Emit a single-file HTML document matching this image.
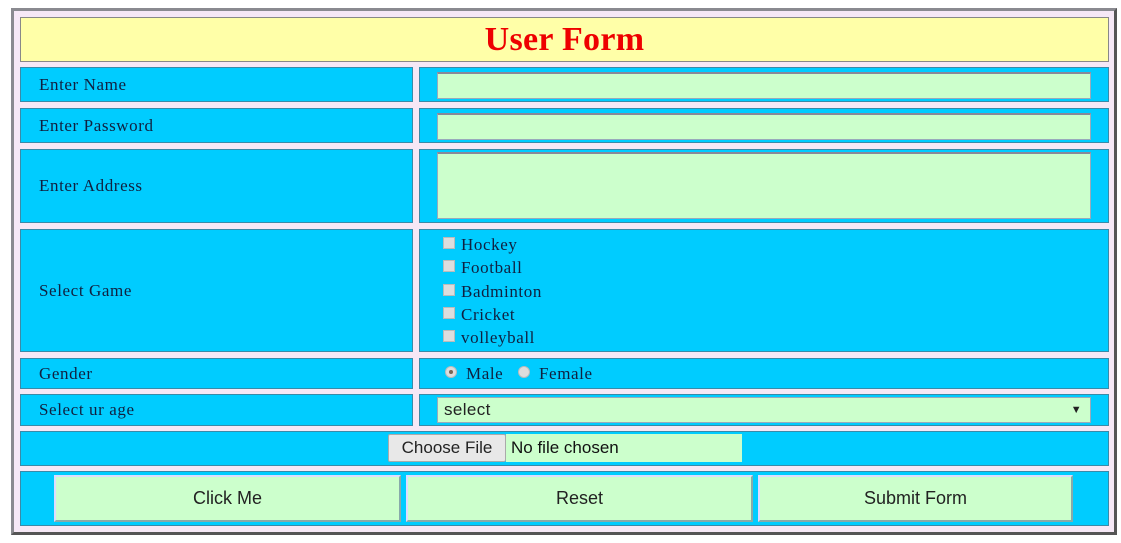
<!DOCTYPE html><html><head><style>
body{margin:0;width:1121px;height:543px;background:#fff;position:relative;overflow:hidden;font-family:"Liberation Serif",serif;color:#102040}
div{position:absolute;box-sizing:border-box}
.c{background:#00ccff;border:1px solid #3a8aa8}
.l{left:20px;width:393px;padding-left:18px;font-size:17px;letter-spacing:0.6px;display:flex;align-items:center}
.r{left:419px;width:690px}
.in{background:#ccffcc;border:1px solid #9ab;border-top:2px solid #889;left:437px;width:654px}
.cb{width:12px;height:12px;background:#ddd;border:1px solid #bbb;left:443px}
.t{font-size:17px;letter-spacing:0.6px;left:461px;white-space:nowrap}
.btn{background:#ccffcc;border:2px solid #8aa;border-top-color:#ddf;border-left-color:#ddf;top:475px;height:47px;font-family:"Liberation Sans",sans-serif;font-size:18px;display:flex;align-items:center;justify-content:center;color:#222}
</style></head><body>
<div style="left:11px;top:8px;width:1106px;height:527px;background:#f6e8f6;border:3px solid #8a8a90;border-right-color:#555;border-bottom-color:#555"></div>
<div style="left:20px;top:17px;width:1089px;height:45px;background:#ffffa8;border:1px solid #888;text-align:center;font-weight:bold;font-size:34px;letter-spacing:0.3px;color:#e00;line-height:43px">User Form</div>
<div class="c l" style="top:67px;height:35px">Enter Name</div><div class="c r" style="top:67px;height:35px"></div>
<div class="in" style="top:72px;height:27px"></div>
<div class="c l" style="top:108px;height:35px">Enter Password</div><div class="c r" style="top:108px;height:35px"></div>
<div class="in" style="top:113px;height:27px"></div>
<div class="c l" style="top:149px;height:74px">Enter Address</div><div class="c r" style="top:149px;height:74px"></div>
<div class="in" style="top:152px;height:67px"></div>
<div class="c l" style="top:229px;height:123px">Select Game</div><div class="c r" style="top:229px;height:123px"></div>
<div class="cb" style="top:237px"></div><div class="t" style="top:235px">Hockey</div>
<div class="cb" style="top:260px"></div><div class="t" style="top:258px">Football</div>
<div class="cb" style="top:284px"></div><div class="t" style="top:282px">Badminton</div>
<div class="cb" style="top:307px"></div><div class="t" style="top:305px">Cricket</div>
<div class="cb" style="top:330px"></div><div class="t" style="top:328px">volleyball</div>
<div class="c l" style="top:358px;height:31px">Gender</div><div class="c r" style="top:358px;height:31px"></div>
<div style="left:445px;top:366px;width:12px;height:12px;border-radius:50%;background:#ddd;border:1px solid #bbb"><div style="left:3px;top:3px;width:4px;height:4px;border-radius:50%;background:#765"></div></div>
<div class="t" style="left:466px;top:364px">Male</div>
<div style="left:518px;top:366px;width:12px;height:12px;border-radius:50%;background:#ddd;border:1px solid #bbb"></div>
<div class="t" style="left:539px;top:364px">Female</div>
<div class="c l" style="top:394px;height:32px">Select ur age</div><div class="c r" style="top:394px;height:32px"></div>
<div style="left:437px;top:397px;width:654px;height:26px;background:#ccffcc;border:1px solid #9ab;font-family:'Liberation Sans',sans-serif;font-size:17px;letter-spacing:0.4px;padding-left:6px;line-height:24px;color:#222">select<span style="position:absolute;right:8px;font-size:11px">▼</span></div>
<div class="c" style="left:20px;top:431px;width:1089px;height:35px"></div>
<div style="left:388px;top:434px;width:118px;height:28px;background:#e8e8e8;border:1px solid #aaa;border-radius:2px;font-family:'Liberation Sans',sans-serif;font-size:17px;text-align:center;line-height:26px;color:#222">Choose File</div>
<div style="left:506px;top:434px;width:236px;height:28px;background:#ccffcc;font-family:'Liberation Sans',sans-serif;font-size:17px;padding-left:5px;line-height:28px;color:#111">No file chosen</div>
<div class="c" style="left:20px;top:471px;width:1089px;height:55px"></div>
<div class="btn" style="left:54px;width:347px">Click Me</div>
<div class="btn" style="left:406px;width:347px">Reset</div>
<div class="btn" style="left:758px;width:315px">Submit Form</div>
</body></html>
